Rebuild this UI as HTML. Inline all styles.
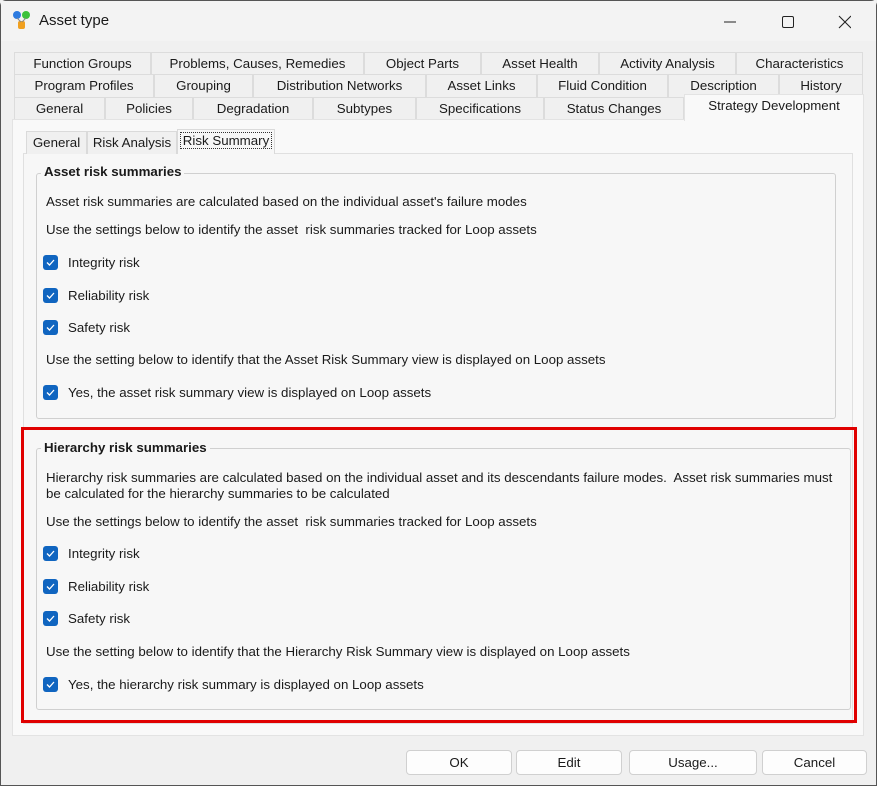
<!DOCTYPE html>
<html><head><style>
*{box-sizing:border-box;margin:0;padding:0}
body{width:877px;height:786px;background:#f0f0f0;font-family:"Liberation Sans",sans-serif;font-size:13.3px;color:#1a1a1a;position:relative;overflow:hidden}
.win{position:absolute;left:0;top:0;width:877px;height:786px;border:1px solid #555;border-radius:6px 6px 0 0;background:#f0f0f0}
.title{position:absolute;left:0;top:0;width:875px;height:40px;background:#f3f3f3}
.abs{position:absolute}
.tab{position:absolute;height:23px;border:1px solid #dcdcdc;border-bottom:none;background:#f0f0f0;text-align:center;line-height:21px;font-size:13.3px}
.panel{position:absolute;left:11px;top:118px;width:852px;height:617px;background:#f9f9f9;border:1px solid #e3e3e3}
.itab{position:absolute;top:130px;height:23px;border:1px solid #dadada;border-bottom:none;line-height:22px;text-align:center;font-size:13.3px;background:#f0f0f0}
.ipanel{position:absolute;left:22px;top:152px;width:830px;height:571px;border:1px solid #e0e0e0;background:#f7f7f7}
.grp{position:absolute;border:1px solid #d0d0d0;border-radius:3px}
.leg{position:absolute;background:#f7f7f7;font-weight:bold;font-size:13.3px;padding:0 3px}
.t{position:absolute;left:45px;white-space:nowrap}
.cb{position:absolute;left:42px;width:15px;height:15px;border-radius:3px;background:#1065c0}
.cb svg{position:absolute;left:2px;top:2px}
.cl{position:absolute;left:67px;white-space:nowrap}
.btn{position:absolute;top:749px;height:25px;border:1px solid #d0d0d0;border-radius:4px;background:#fdfdfd;text-align:center;line-height:23px;font-size:13.3px}
</style></head><body>
<div class="win">
<div class="title"></div>
<svg class="abs" style="left:10px;top:9px" width="24" height="22" viewBox="0 0 24 22"><circle cx="6" cy="5" r="4" fill="#2d7be0"/><circle cx="15" cy="5" r="4" fill="#3cc23c"/><rect x="7" y="11" width="7" height="8" rx="2" fill="#f0a020"/><line x1="6" y1="8" x2="10" y2="12" stroke="#888"/><line x1="15" y1="8" x2="11" y2="12" stroke="#888"/></svg>
<div class="abs" style="left:38px;top:11px;font-size:15px">Asset type</div>
<svg class="abs" style="left:720px;top:14px" width="130" height="14"><line x1="3" y1="7" x2="15" y2="7" stroke="#222"/><rect x="61.5" y="1.5" width="11" height="11" rx="1.5" fill="none" stroke="#222"/><path d="M121 1 L133 13 M133 1 L121 13" stroke="#222" stroke-width="1.1" transform="translate(-3,0)"/></svg>

<div class="tab" style="left:13px;top:51px;width:137px">Function Groups</div>
<div class="tab" style="left:150px;top:51px;width:213px">Problems, Causes, Remedies</div>
<div class="tab" style="left:363px;top:51px;width:117px">Object Parts</div>
<div class="tab" style="left:480px;top:51px;width:118px">Asset Health</div>
<div class="tab" style="left:598px;top:51px;width:137px">Activity Analysis</div>
<div class="tab" style="left:735px;top:51px;width:127px">Characteristics</div>
<div class="tab" style="left:13px;top:73px;width:140px">Program Profiles</div>
<div class="tab" style="left:153px;top:73px;width:99px">Grouping</div>
<div class="tab" style="left:252px;top:73px;width:173px">Distribution Networks</div>
<div class="tab" style="left:425px;top:73px;width:111px">Asset Links</div>
<div class="tab" style="left:536px;top:73px;width:131px">Fluid Condition</div>
<div class="tab" style="left:667px;top:73px;width:111px">Description</div>
<div class="tab" style="left:778px;top:73px;width:84px">History</div>
<div class="tab" style="left:13px;top:96px;width:91px">General</div>
<div class="tab" style="left:104px;top:96px;width:88px">Policies</div>
<div class="tab" style="left:192px;top:96px;width:120px">Degradation</div>
<div class="tab" style="left:312px;top:96px;width:103px">Subtypes</div>
<div class="tab" style="left:415px;top:96px;width:128px">Specifications</div>
<div class="tab" style="left:543px;top:96px;width:140px">Status Changes</div>
<div class="panel"></div>
<div class="tab" style="left:683px;top:93px;width:180px;height:27px;background:#f9f9f9;border-color:#e3e3e3;line-height:22px">Strategy Development</div>

<div class="ipanel"></div>
<div class="itab" style="left:25px;width:61px">General</div>
<div class="itab" style="left:86px;width:90px">Risk Analysis</div>
<div class="itab" style="left:176px;top:128px;width:98px;height:25px;background:#f7f7f7;line-height:22px"><span style="border:1px dotted #333;padding:0 2px">Risk Summary</span></div>

<div class="grp" style="left:35px;top:172px;width:800px;height:246px"></div>
<div class="leg" style="left:40px;top:163px">Asset risk summaries</div>
<div class="t" style="top:193px">Asset risk summaries are calculated based on the individual asset's failure modes</div>
<div class="t" style="top:221px">Use the settings below to identify the asset&nbsp; risk summaries tracked for Loop assets</div>
<div class="cb" style="top:254px"><svg width="11" height="11"><path d="M2 5.5 L4.5 8 L9 3" stroke="#fff" stroke-width="1.3" fill="none"/></svg></div><div class="cl" style="top:254px">Integrity risk</div>
<div class="cb" style="top:287px"><svg width="11" height="11"><path d="M2 5.5 L4.5 8 L9 3" stroke="#fff" stroke-width="1.3" fill="none"/></svg></div><div class="cl" style="top:287px">Reliability risk</div>
<div class="cb" style="top:319px"><svg width="11" height="11"><path d="M2 5.5 L4.5 8 L9 3" stroke="#fff" stroke-width="1.3" fill="none"/></svg></div><div class="cl" style="top:319px">Safety risk</div>
<div class="t" style="top:351px">Use the setting below to identify that the Asset Risk Summary view is displayed on Loop assets</div>
<div class="cb" style="top:384px"><svg width="11" height="11"><path d="M2 5.5 L4.5 8 L9 3" stroke="#fff" stroke-width="1.3" fill="none"/></svg></div><div class="cl" style="top:384px">Yes, the asset risk summary view is displayed on Loop assets</div>

<div class="grp" style="left:35px;top:447px;width:815px;height:262px"></div>
<div class="leg" style="left:40px;top:439px">Hierarchy risk summaries</div>
<div class="t" style="top:469px">Hierarchy risk summaries are calculated based on the individual asset and its descendants failure modes.&nbsp; Asset risk summaries must</div>
<div class="t" style="top:485px">be calculated for the hierarchy summaries to be calculated</div>
<div class="t" style="top:513px">Use the settings below to identify the asset&nbsp; risk summaries tracked for Loop assets</div>
<div class="cb" style="top:545px"><svg width="11" height="11"><path d="M2 5.5 L4.5 8 L9 3" stroke="#fff" stroke-width="1.3" fill="none"/></svg></div><div class="cl" style="top:545px">Integrity risk</div>
<div class="cb" style="top:578px"><svg width="11" height="11"><path d="M2 5.5 L4.5 8 L9 3" stroke="#fff" stroke-width="1.3" fill="none"/></svg></div><div class="cl" style="top:578px">Reliability risk</div>
<div class="cb" style="top:610px"><svg width="11" height="11"><path d="M2 5.5 L4.5 8 L9 3" stroke="#fff" stroke-width="1.3" fill="none"/></svg></div><div class="cl" style="top:610px">Safety risk</div>
<div class="t" style="top:643px">Use the setting below to identify that the Hierarchy Risk Summary view is displayed on Loop assets</div>
<div class="cb" style="top:676px"><svg width="11" height="11"><path d="M2 5.5 L4.5 8 L9 3" stroke="#fff" stroke-width="1.3" fill="none"/></svg></div><div class="cl" style="top:676px">Yes, the hierarchy risk summary is displayed on Loop assets</div>

<div class="abs" style="left:20px;top:426px;width:836px;height:296px;border:3px solid #e00000"></div>

<div class="btn" style="left:405px;width:106px">OK</div>
<div class="btn" style="left:515px;width:106px">Edit</div>
<div class="btn" style="left:628px;width:128px">Usage...</div>
<div class="btn" style="left:761px;width:105px">Cancel</div>
</div>
</body></html>
